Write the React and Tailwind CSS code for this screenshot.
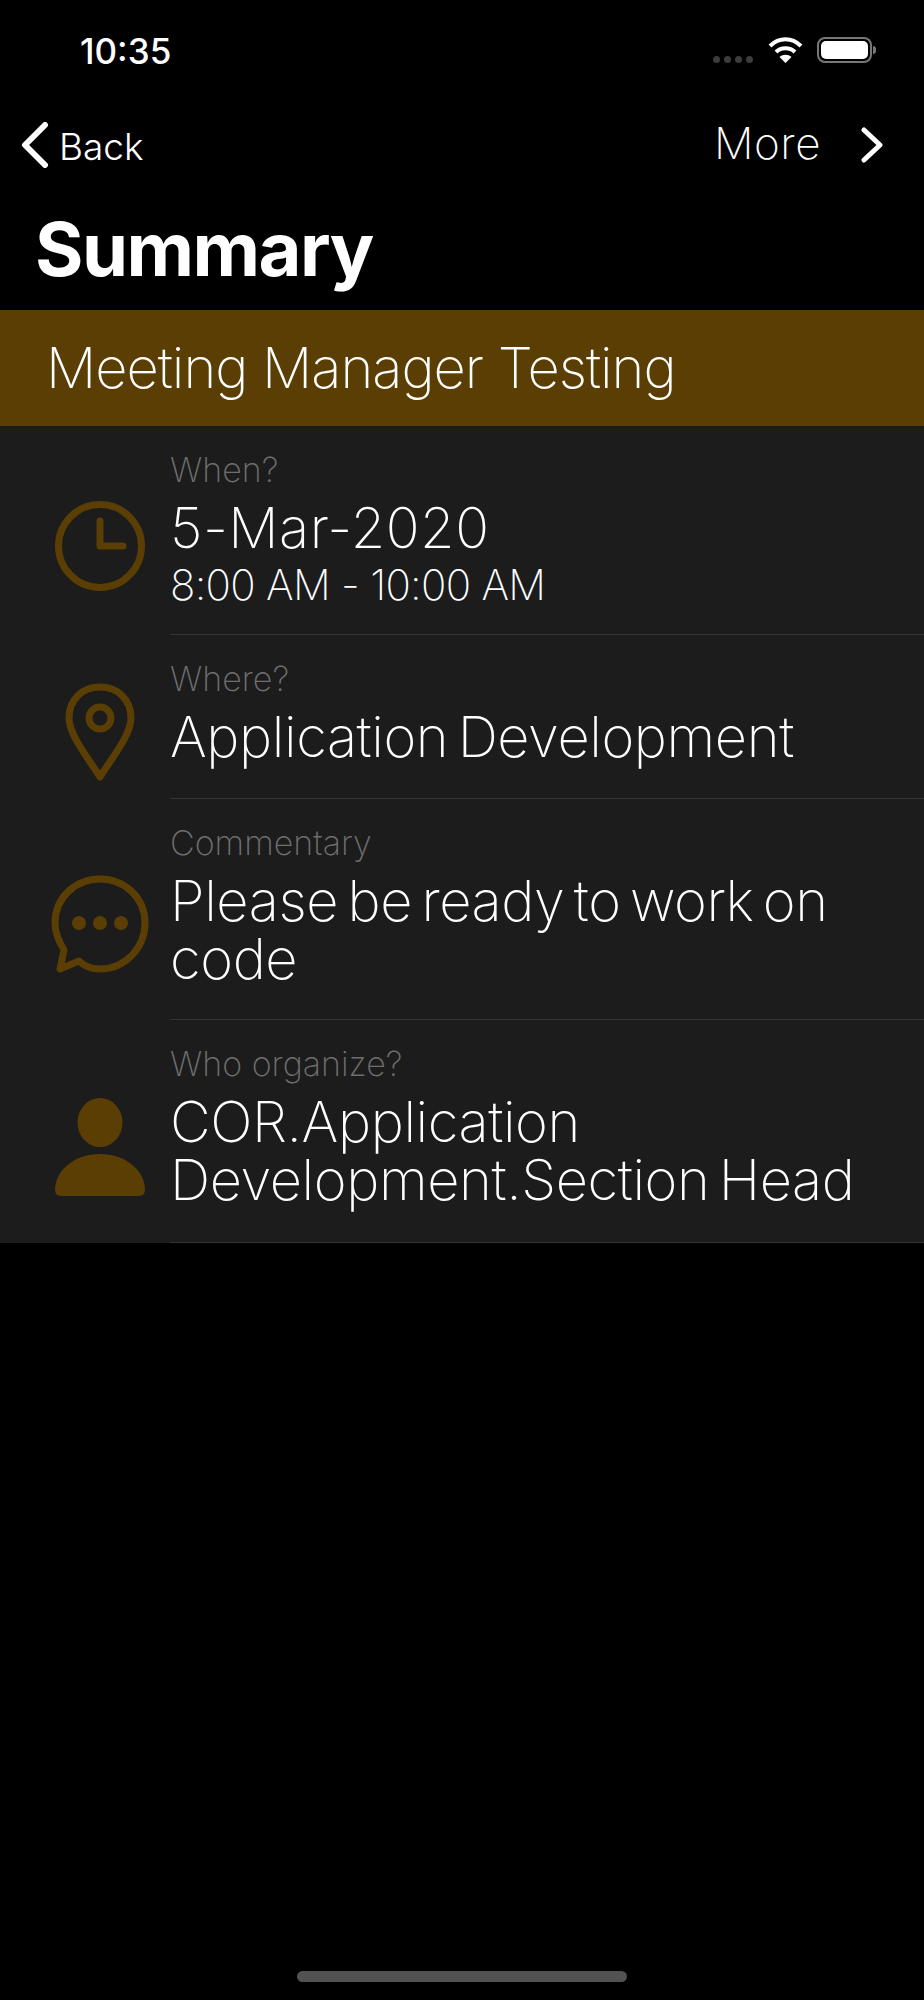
import React from 'react';

const GOLD = '#5a3e04';

const ClockIcon = () => (
    <svg width="90" height="90" viewBox="0 0 90 90" fill="none" stroke={GOLD} strokeWidth="7" strokeLinecap="round" strokeLinejoin="round">
        <circle cx="45" cy="45" r="41.5" />
        <path d="M45 20V45H68" />
    </svg>
);

const PinIcon = () => (
    <svg width="70" height="98" viewBox="0 0 70 98" fill="none" stroke={GOLD} strokeWidth="7" strokeLinecap="round" strokeLinejoin="round">
        <path d="M35 94C24 76 4 52 4 35C4 16 18 4 35 4C52 4 66 16 66 35C66 52 46 76 35 94Z" />
        <circle cx="35" cy="35" r="11" />
    </svg>
);

const ChatIcon = () => (
    <svg width="98" height="100" viewBox="0 0 98 100" fill="none" stroke={GOLD} strokeWidth="7" strokeLinecap="round" strokeLinejoin="round">
        <path d="M49 4C24 4 4 23 4 48C4 59 8 67 13 75L9 94L28 86C34 92 41 94 49 94C74 94 94 73 94 48C94 23 74 4 49 4Z" />
        <circle cx="28" cy="48" r="3.5" fill={GOLD} />
        <circle cx="49" cy="48" r="3.5" fill={GOLD} />
        <circle cx="70" cy="48" r="3.5" fill={GOLD} />
    </svg>
);

const PersonIcon = () => (
    <svg width="90" height="98" viewBox="0 0 90 98" fill={GOLD}>
        <ellipse cx="45" cy="24.5" rx="22.5" ry="24.5" />
        <path d="M6 98C2 98 0 95 0 92C0 72 20 56 45 56C70 56 90 72 90 92C90 95 88 98 84 98Z" />
    </svg>
);

const Wifi = () => (
    <svg width="35" height="26" viewBox="0 0 35 26" fill="none" stroke="#fff" strokeWidth="4">
        <path d="M2 9C11 0 24 0 33 9" />
        <path d="M8 15C13 10 22 10 27 15" />
        <path d="M17.5 26L11.5 20C15 17 20 17 23.5 20Z" fill="#fff" stroke="none" />
    </svg>
);

const Row = ({ icon, label, className, children }) => (
    <div className={`flex ${className}`}>
        <div className="w-[170px] shrink-0 flex items-center justify-center pl-[30px] pt-[30px]">{icon}</div>
        <div className="flex-1 border-b border-[#343434]">
            <div className="text-[34px] leading-[40px] font-extralight text-[#6e6e6e] pt-[24px]">{label}</div>
            {children}
        </div>
    </div>
);

export default function App() {
    return (
        <div className="h-[2000px] bg-black text-white flex flex-col font-['Inter',sans-serif]">
            {/* Status bar */}
            <div className="h-[100px] flex items-start justify-between pl-[80px] pr-[48px] pt-[31px]">
                <span className="text-[35px] leading-[40px] font-medium">10:35</span>
                <div className="flex items-center pt-[6px]">
                    <div className="flex gap-[4px] mt-[18px] mr-[15px]">
                        <span className="w-[7px] h-[7px] rounded-full bg-[#3c3c3c]" />
                        <span className="w-[7px] h-[7px] rounded-full bg-[#3c3c3c]" />
                        <span className="w-[7px] h-[7px] rounded-full bg-[#3c3c3c]" />
                        <span className="w-[7px] h-[7px] rounded-full bg-[#3c3c3c]" />
                    </div>
                    <Wifi />
                    <div className="ml-[14px] w-[55px] h-[26px] rounded-[8px] border-2 border-[#777777] p-[2px]">
                        <div className="w-full h-full rounded-[5px] bg-white" />
                    </div>
                    <div className="w-[3px] h-[8px] ml-[1px] rounded-r-sm bg-[#777777]" />
                </div>
            </div>

            {/* Nav */}
            <div className="h-[70px] flex items-center justify-between pl-[21px] pr-[41px] mt-[10px]">
                <div className="flex items-center">
                    <svg width="28" height="46" viewBox="0 0 28 46" fill="none" stroke="#fff" strokeWidth="6" strokeLinecap="round" strokeLinejoin="round">
                        <path d="M24 3L4 23L24 43" />
                    </svg>
                    <span className="ml-[10px] text-[37px] leading-[44px] font-light mt-[4px]">Back</span>
                </div>
                <div className="flex items-center">
                    <span className="text-[44px] leading-[50px] font-extralight tracking-[0.5px] -mt-[4px]">More</span>
                    <svg className="ml-[40px]" width="22" height="36" viewBox="0 0 22 36" fill="none" stroke="#fff" strokeWidth="5" strokeLinecap="round" strokeLinejoin="round">
                        <path d="M3 3L19 18L3 33" />
                    </svg>
                </div>
            </div>

            <h1 className="pl-[35px] h-[130px] pt-[29px] text-[74px] leading-[80px] font-bold tracking-[-1.5px]">Summary</h1>

            {/* Meeting title */}
            <div className="h-[116px] bg-[#5a3e04] flex items-center pl-[46px] text-[56px] font-extralight tracking-[-1px]">
                Meeting Manager Testing
            </div>

            {/* Details */}
            <div className="bg-[#1c1c1c]">
                <Row icon={<ClockIcon />} label="When?" className="h-[209px]">
                    <div className="text-[56px] leading-[58px] font-extralight tracking-[0.5px] mt-[9px]">5-Mar-2020</div>
                    <div className="text-[42px] leading-[52px] font-extralight tracking-[-0.7px] mt-[2px]">8:00 AM - 10:00 AM</div>
                </Row>
                <Row icon={<PinIcon />} label="Where?" className="h-[164px]">
                    <div className="text-[56px] leading-[58px] font-extralight tracking-[-0.4px] [word-spacing:-6px] mt-[9px]">Application Development</div>
                </Row>
                <Row icon={<ChatIcon />} label="Commentary" className="h-[221px]">
                    <div className="text-[56px] leading-[58px] font-extralight tracking-[-0.4px] [word-spacing:-6px] mt-[9px] pr-[80px]">Please be ready to work on code</div>
                </Row>
                <Row icon={<PersonIcon />} label="Who organize?" className="h-[223px]">
                    <div className="text-[56px] leading-[58px] font-extralight tracking-[-0.4px] [word-spacing:-6px] mt-[9px] pr-[20px]">COR.Application Development.Section Head</div>
                </Row>
            </div>

            {/* Home indicator */}
            <div className="mt-auto mb-[18px] mx-auto w-[330px] h-[11px] rounded-full bg-[#525252]" />
        </div>
    );
}
